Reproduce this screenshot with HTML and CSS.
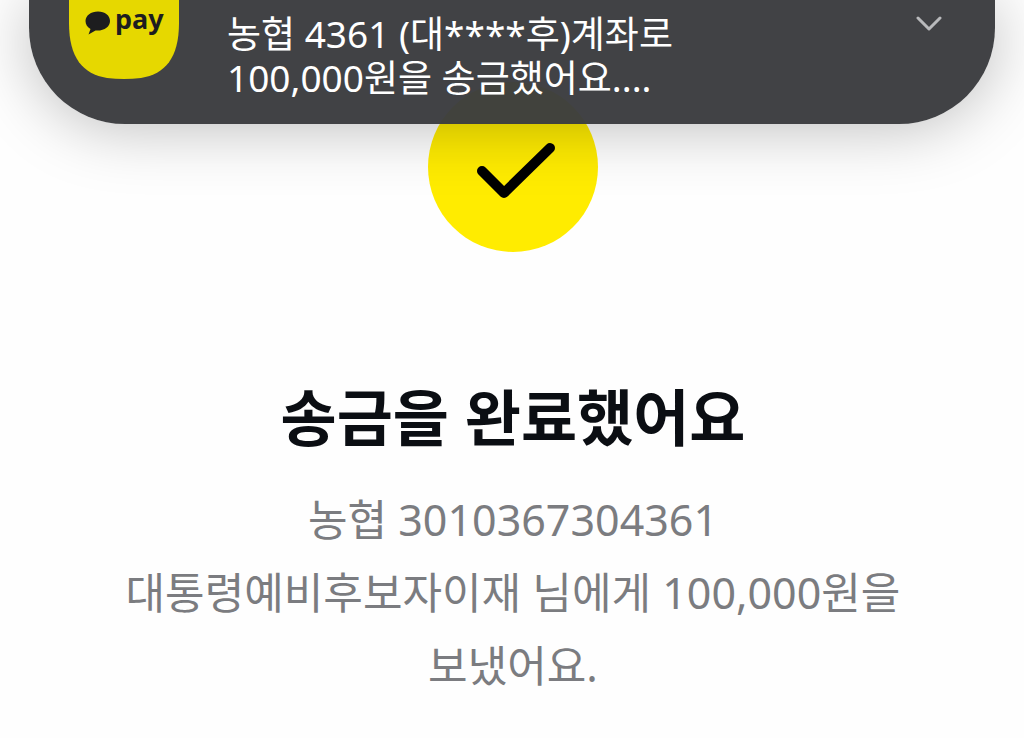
FILE: index.html
```
<!DOCTYPE html>
<html lang="ko">
<head>
    <meta charset="UTF-8">
    <meta name="viewport" content="width=device-width, initial-scale=1.0">
    <title>송금 완료</title>
    <link rel="stylesheet" href="styles.css">
</head>
<body>
    <aside class="notification">
        <svg class="app-icon" viewBox="0 0 110 79" role="img" aria-label="pay">
            <path class="app-shape" d="M0 0V23C0 58 14 74 38 78Q55 80 72 78C96 74 110 58 110 23V0Z"/>
            <path class="app-ink" d="M29 11.500C22 11.500 16.500 15.500 16.500 21C16.500 24.500 18.500 27.300 21.500 29L19.500 34.500L26.500 30.500C35 31.200 41 27 41 21C41 15.500 36 11.500 29 11.500Z"/>
            <text class="app-name app-ink" x="46" y="29">pay</text>
        </svg>
        <p class="message">농협 4361 (대****후)계좌로<br>100,000원을 송금했어요....</p>
        <button class="expand" aria-label="펼치기">
            <svg width="28" height="16" viewBox="0 0 28 16">
                <path d="M3 2L14 13L25 2"/>
            </svg>
        </button>
    </aside>

    <main class="complete">
        <svg class="check" viewBox="0 0 170 170">
            <circle cx="85" cy="85" r="85"/>
            <path d="M54 89L76 111L122 66"/>
        </svg>
        <h1>송금을 완료했어요</h1>
        <p class="detail">농협 3010367304361<br>대통령예비후보자이재 님에게 100,000원을<br>보냈어요.</p>
    </main>
</body>
</html>
```
FILE: styles.css
```
:root {
    --yellow: #ffec00;
    --card-bg: rgba(59, 60, 63, 0.97);
    --text: #0b0e13;
    --text-sub: #7b7c80;
}

* {
    box-sizing: border-box;
    margin: 0;
    padding: 0;
}

body {
    font-family: 'Noto Sans', 'Noto Sans CJK KR', sans-serif;
    background: #fefefe;
    color: var(--text);
}

/* heads-up notification lying over the page */
.notification {
    position: absolute;
    top: 0;
    left: 29px;
    right: 29px;
    display: flex;
    align-items: flex-start;
    height: 124px;
    padding: 0 52px 0 40px;
    background: var(--card-bg);
    border-radius: 0 0 96px 96px;
    box-shadow: 0 4px 64px rgba(0, 0, 0, 0.26);
}

.app-icon {
    flex: none;
    width: 110px;
    height: 79px;
}

.app-shape {
    fill: #e6d800;
}

.app-ink {
    fill: #1d1d1f;
}

.app-name {
    font-size: 27px;
    font-weight: 700;
}

.message {
    flex: 1;
    margin: 12px 0 0 48px;
    color: #fff;
    font-size: 37px;
    line-height: 44px;
}

.expand {
    margin-top: 16px;
    background: none;
    border: none;
    cursor: pointer;
}

.expand svg {
    display: block;
}

.expand path {
    fill: none;
    stroke: #b9babc;
    stroke-width: 3;
    stroke-linecap: round;
    stroke-linejoin: round;
}

.complete {
    display: flex;
    flex-direction: column;
    align-items: center;
    padding: 82px 22px 24px 24px;
    text-align: center;
}

.check {
    width: 170px;
    height: 170px;
}

.check circle {
    fill: var(--yellow);
}

.check path {
    fill: none;
    stroke: #000;
    stroke-width: 10;
    stroke-linecap: round;
    stroke-linejoin: round;
}

h1 {
    margin-top: 124px;
    font-size: 61px;
    font-weight: 700;
    line-height: 84px;
}

.detail {
    margin-top: 23px;
    color: var(--text-sub);
    font-size: 43px;
    line-height: 73px;
}
```
